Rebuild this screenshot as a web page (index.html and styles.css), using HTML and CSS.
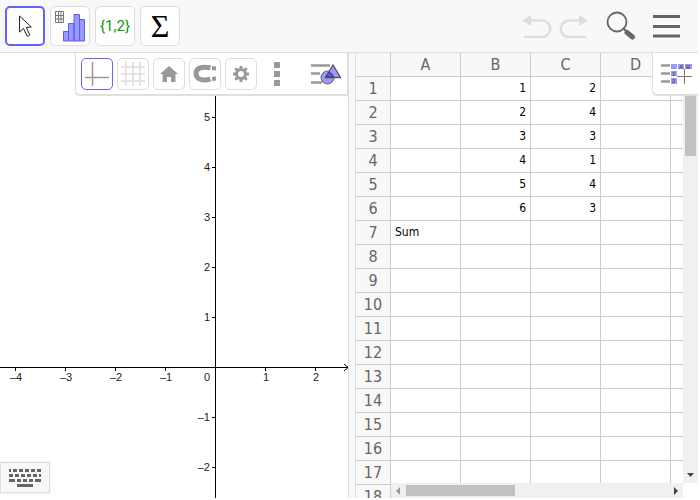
FILE: index.html
```html
<!DOCTYPE html>
<html lang="en">
<head>
<meta charset="utf-8">
<title>Graphing and spreadsheet</title>
<link rel="stylesheet" href="styles.css">
</head>
<body>
<div class="app">
  <header class="toolbar">
    <div class="tools">
      <button class="tool tool-active" aria-label="Move">
        <svg width="32" height="32" viewBox="0 0 32 32"><path d="M10.500 6v16l4-3.500 3.500 7.500q2 .5 2.800-1l-3.500-7.500 5-.5z" fill="#fff" stroke="#222" stroke-width="1"/></svg>
      </button>
      <button class="tool" aria-label="One variable analysis">
        <svg width="32" height="32" viewBox="0 0 32 32"><path d="M1.500 1.500h8v11h-8zM4.500 1.500v11M7 1.500v11M1.500 5.500h8M1.500 9h8" fill="#fff" stroke="#777"/><path d="M9.500 21.500h5v9.500h-5zM14.500 13.500h5.500v17.500h-5.500zM20 4.500h5.500v26.500h-5.500zM25.500 9.500h5v21.500h-5z" fill="#99f" stroke="#5a5af5"/></svg>
      </button>
      <button class="tool tool-list">{1,2}</button>
      <button class="tool tool-sum">Σ</button>
    </div>
    <div class="actions">
      <button class="plain" aria-label="Undo"><svg width="30" height="24" viewBox="0 0 30 24"><path d="M8 6.500h12a7.500 7.500 0 0 1 0 16.500H2" fill="none" stroke="#ddd" stroke-width="2.500"/><path d="M0 6.500 9 1v11z" fill="#ddd"/></svg></button>
      <button class="plain" aria-label="Redo"><svg width="30" height="24" viewBox="0 0 30 24"><path d="M22 6.500H10a7.500 7.500 0 0 0 0 16.500h17" fill="none" stroke="#ddd" stroke-width="2.500"/><path d="M29 6.500 20 1v11z" fill="#ddd"/></svg></button>
      <button class="plain search" aria-label="Search"><svg width="30" height="30" viewBox="0 0 30 30"><circle cx="11" cy="11" r="9.500" fill="none" stroke="#666" stroke-width="1.800"/><path d="m17 17 3.500 3.500" stroke="#666" stroke-width="2"/><path d="m21 21.500 5.500 4.500" stroke="#666" stroke-width="5" stroke-linecap="round"/></svg></button>
      <button class="plain menu" aria-label="Menu"><svg width="28" height="24" viewBox="0 0 28 24"><path d="M0 2.500h27M0 12.500h27M0 22h27" stroke="#666" stroke-width="3"/></svg></button>
    </div>
  </header>
  <main class="views">
    <section class="graphics" aria-label="Graphics">
      <svg class="plot" width="100%" height="100%">
        <g class="axis">
          <path d="M215.500 0v445M212 64.500h3M212 114.500h3M212 164.500h3M212 214.500h3M212 264.500h3M212 364.500h3M212 414.500h3M15.500 314v4M65.500 314v4M115.500 314v4M165.500 314v4M265.500 314v4M315.500 314v4"/>
          <line x1="0" y1="314.500" x2="100%" y2="314.500"/>
          <svg x="100%" y="314" overflow="visible"><path d="M-4-3 0 .500-4 4"/></svg>
        </g>
        <g class="labels" text-anchor="middle">
          <text x="16" y="328">–4</text><text x="66" y="328">–3</text><text x="116" y="328">–2</text><text x="166" y="328">–1</text><text x="266" y="328">1</text><text x="316" y="328">2</text>
        </g>
        <g class="labels" text-anchor="end">
          <text x="210" y="328">0</text><text x="210" y="68">5</text><text x="210" y="118">4</text><text x="210" y="168">3</text><text x="210" y="218">2</text><text x="210" y="268">1</text><text x="210" y="368">–1</text><text x="210" y="418">–2</text>
        </g>
      </svg>
      <div class="stylebar">
        <button class="style style-active" aria-label="Show axes"><svg width="24" height="24" viewBox="0 0 24 24"><path d="M0 15.500h24M7.500 0v24" stroke="#999" stroke-width="1.500"/></svg></button>
        <button class="style" aria-label="Show grid"><svg width="24" height="24" viewBox="0 0 24 24"><path d="M0 5h24M0 12h24M0 19h24M5 0v24M12 0v24M19 0v24" stroke="#ddd" stroke-width="1.500"/></svg></button>
        <button class="style" aria-label="Standard view"><svg width="24" height="24" viewBox="0 0 24 24"><path d="m12 4 9 8h-2.500v8H14v-5h-4v5H5.500v-8H3z" fill="#999"/></svg></button>
        <button class="style" aria-label="Point capturing"><svg width="24" height="24" viewBox="0 0 24 24"><path d="M17.500 5.800C9 4 3 6 3 11.500s6 8 14.500 5.700" fill="none" stroke="#999" stroke-width="5"/><path d="m19 4 4 .5v4L19 8zM19 15l4-.5v4l-4 .5z" fill="#999"/></svg></button>
        <button class="style" aria-label="Settings"><svg width="24" height="24" viewBox="0 0 24 24"><circle cx="12" cy="12" r="4.500" fill="none" stroke="#999" stroke-width="3"/><path d="M12 4v3M12 17v3M4 12h3M17 12h3M6.300 6.300l2 2M15.700 15.700l2 2M6.300 17.700l2-2M15.700 8.300l2-2" stroke="#999" stroke-width="3"/></svg></button>
        <button class="plain dots" aria-label="More"><svg width="6" height="24" viewBox="0 0 6 24"><path d="M0 0h6v6H0zM0 9h6v6H0zM0 18h6v6H0z" fill="#999"/></svg></button>
        <button class="plain" aria-label="Graphics style bar"><svg width="32" height="24" viewBox="0 0 32 24"><path d="M0 3.500h19M0 11.500h9M0 20.500h11" stroke="#999" stroke-width="2.500"/><circle cx="16.500" cy="15.500" r="6.500" fill="#99f" stroke="#666"/><path d="M14.500 15.500 22 3l7.500 12.500z" fill="#99f" stroke="#555" stroke-width="1.300"/><path d="m15 15 3-5q4 1.500 4.500 5z" fill="#55f" stroke="#444"/></svg></button>
      </div>
      <button class="keyboard" aria-label="Keyboard"><svg width="32" height="18" viewBox="0 0 32 18"><g stroke="#666" stroke-width="3"><path d="M0 1.500h32" stroke-dasharray="4 2" stroke-dashoffset="2"/><path d="M0 6.500h32" stroke-dasharray="4 2"/><path d="M0 11.500h6M8 11.500h4M14 11.500h4M20 11.500h4M26 11.500h6M8 16.500h16"/></g></svg></button>
    </section>
    <div class="splitter"></div>
    <section class="sheet" aria-label="Spreadsheet">
      <div class="cells">
        <table>
          <thead><tr><th class="corner"></th><th>A</th><th>B</th><th>C</th><th>D</th><th></th></tr></thead>
          <tbody>
            <tr><th>1</th><td></td><td>1</td><td>2</td><td></td><td></td></tr>
            <tr><th>2</th><td></td><td>2</td><td>4</td><td></td><td></td></tr>
            <tr><th>3</th><td></td><td>3</td><td>3</td><td></td><td></td></tr>
            <tr><th>4</th><td></td><td>4</td><td>1</td><td></td><td></td></tr>
            <tr><th>5</th><td></td><td>5</td><td>4</td><td></td><td></td></tr>
            <tr><th>6</th><td></td><td>6</td><td>3</td><td></td><td></td></tr>
            <tr><th>7</th><td class="text">Sum</td><td></td><td></td><td></td><td></td></tr>
            <tr><th>8</th><td></td><td></td><td></td><td></td><td></td></tr>
            <tr><th>9</th><td></td><td></td><td></td><td></td><td></td></tr>
            <tr><th>10</th><td></td><td></td><td></td><td></td><td></td></tr>
            <tr><th>11</th><td></td><td></td><td></td><td></td><td></td></tr>
            <tr><th>12</th><td></td><td></td><td></td><td></td><td></td></tr>
            <tr><th>13</th><td></td><td></td><td></td><td></td><td></td></tr>
            <tr><th>14</th><td></td><td></td><td></td><td></td><td></td></tr>
            <tr><th>15</th><td></td><td></td><td></td><td></td><td></td></tr>
            <tr><th>16</th><td></td><td></td><td></td><td></td><td></td></tr>
            <tr><th>17</th><td></td><td></td><td></td><td></td><td></td></tr>
            <tr><th>18</th><td></td><td></td><td></td><td></td><td></td></tr>
          </tbody>
        </table>
      </div>
      <div class="vbar"><div class="vthumb"></div><svg width="7" height="4" viewBox="0 0 7 4"><path d="M0 0h7L3.500 4z" fill="#444"/></svg></div>
      <div class="hbar"><svg width="4" height="8" viewBox="0 0 4 8"><path d="M4 0v8L0 4z" fill="#999"/></svg><div class="hthumb"></div><svg class="end" width="4" height="8" viewBox="0 0 4 8"><path d="M0 0v8l4-4z" fill="#444"/></svg></div>
      <button class="sheet-style" aria-label="Spreadsheet style bar"><svg width="32" height="22" viewBox="0 0 32 22"><path d="M0 2.500h9M0 10.500h9M0 18.500h9" stroke="#999" stroke-width="2.500"/><path d="M10 1h6v5h-6zM17 1h6v5h-6zM24 1h7v5h-7zM10 8h6v5h-6zM10 15h6v6h-6z" fill="#99f"/><text x="18" y="6">A</text><text x="25" y="6">B</text><text x="11" y="13">1</text><text x="11" y="20">2</text><path d="M16 13.500h15M23.500 6v15" stroke="#777"/></svg></button>
    </section>
  </main>
</div>
</body>
</html>
```

FILE: styles.css
```css
* { box-sizing: border-box; }
body { margin: 0; background: #fff; font-family: "DejaVu Sans Condensed", "DejaVu Sans", sans-serif; }
button { padding: 0; border: 0; background: none; font: inherit; display: flex; align-items: center; justify-content: center; }
svg { display: block; flex: none; }

.app { height: 100vh; padding: 0 2px 2px 0; display: flex; flex-direction: column; overflow: hidden; }
.toolbar { flex: none; height: 53px; padding: 0 17px 0 5px; display: flex; align-items: center; justify-content: space-between; background: #f8f8f8; border-bottom: 1px solid #ddd; }
.tools { display: flex; gap: 5px; }
.tool { width: 40px; height: 40px; background: #fff; border: 1px solid #ddd; border-radius: 5px; }
.tool-active { border: 2px solid #6161ff; }
.tool-list { font: 15px Roboto, sans-serif; color: #0a9a0a; }
.tool-sum { font: 32px "Liberation Serif", serif; color: #000; }
.actions { display: flex; align-items: center; gap: 7px; }
.search { margin-left: 10px; }
.menu { margin-left: 10px; }

.views { flex: 1; min-height: 0; display: grid; grid-template-columns: 349fr 6px 343fr; }
.graphics { position: relative; min-width: 0; overflow: hidden; border-right: 1px solid #ddd; }
.plot { position: absolute; inset: 0; }
.axis { stroke: #000; fill: none; }
.labels { font: 11px "Liberation Sans", sans-serif; fill: #222; }
.stylebar { position: absolute; top: 0; right: 0; height: 42px; padding: 0 4px 0 5px; display: flex; align-items: center; gap: 4px; background: #fff; border: solid #ddd; border-width: 0 1px 1px; border-radius: 0 0 0 5px; box-shadow: 0 1px 1px #ddd; }
.style { width: 32px; height: 32px; border: 1px solid #ddd; border-radius: 5px; }
.style-active { border-color: #6161ff; }
.dots { margin: 0 27px 0 13px; }
.keyboard { position: absolute; left: 0; bottom: 5px; width: 50px; height: 31px; background: #f8f8f8; border: 1px solid #ddd; box-shadow: 0 0 2px #ddd; }
.splitter { background: #f8f8f8; }

.sheet { position: relative; min-width: 0; min-height: 0; border-left: 1px solid #ddd; display: grid; grid-template: minmax(0, 1fr) 15px / minmax(0, 1fr) 15px; }
.cells { grid-area: 1 / 1 / 3 / 2; overflow: hidden; }
table { border-collapse: separate; border-spacing: 0; table-layout: fixed; width: 385px; }
th, td { width: 70px; height: 24px; padding: 0 4px 2px; border: solid #ccc; border-width: 0 1px 1px 0; font-size: 12px; line-height: 14px; text-align: right; color: #000; }
th { padding: 0; font-size: 16px; line-height: 20px; font-weight: normal; text-align: center; background: #f8f8f8; color: #666; }
.corner { width: 35px; }
.text { text-align: left; }
.vbar { grid-area: 1 / 2; background: #f0f0f0; padding: 38px 0 6px; display: flex; flex-direction: column; align-items: center; justify-content: space-between; }
.vthumb { width: 11px; height: 65px; background: #c1c1c1; }
.hbar { grid-area: 2 / 1; margin-left: 35px; padding: 0 5px; display: flex; align-items: center; gap: 6px; background: #f0f0f0; }
.hthumb { width: 109px; height: 11px; background: #c1c1c1; }
.end { margin-left: auto; }
.sheet-style { position: absolute; top: 0; right: 0; width: 46px; height: 42px; padding-left: 2px; background: #fff; border: solid #ddd; border-width: 0 0 1px 1px; border-radius: 0 0 0 5px; box-shadow: 0 1px 1px #ddd; }
.sheet-style text { font: bold 6px "Liberation Sans", sans-serif; fill: #555; }
```
